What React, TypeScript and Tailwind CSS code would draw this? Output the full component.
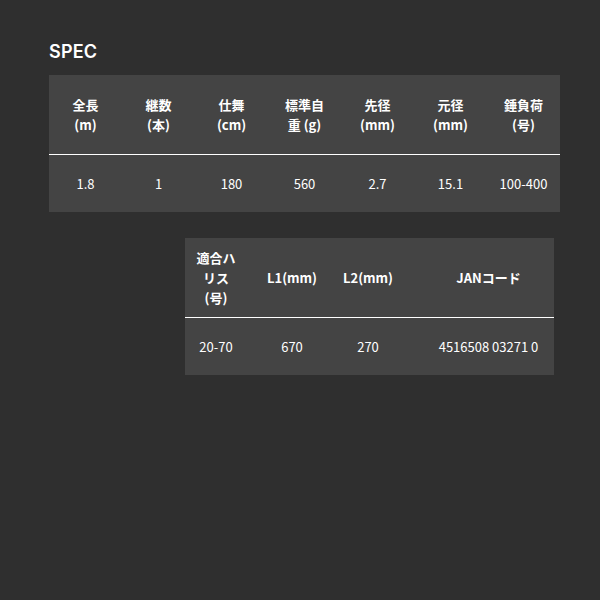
import React from "react";

const jp = { fontFamily: '"Noto Sans CJK JP", "Noto Sans", sans-serif' };

export default function App() {
  const head1: React.ReactNode[] = [
    <>全長<br />(m)</>,
    <>継数<br />(本)</>,
    <>仕舞<br />(cm)</>,
    <>標準自<br />重 (g)</>,
    <>先径<br />(mm)</>,
    <>元径<br />(mm)</>,
    <>錘負荷<br />(号)</>,
  ];
  const body1 = ["1.8", "1", "180", "560", "2.7", "15.1", "100-400"];
  return (
    <div className="w-[600px] h-[600px] bg-[#2f2f2f] text-white overflow-hidden" style={jp}>
      <div className="pt-[41px] pl-[49px]">
        <h2
          className="text-[18px] leading-[22px] font-semibold tracking-[0.2px]"
          style={{ fontFamily: 'Inter, "Noto Sans", sans-serif' }}
        >
          SPEC
        </h2>
      </div>
      <div className="ml-[49px] mt-[12px] w-[511px] bg-[#444444]">
        <div className="grid grid-cols-7 h-[79px] items-center">
          {head1.map((h, i) => (
            <div key={i} className="text-center text-[13px] leading-[20px] font-bold">
              {h}
            </div>
          ))}
        </div>
        <div className="h-[1px] bg-white" />
        <div className="grid grid-cols-7 h-[57px] items-center">
          {body1.map((b, i) => (
            <div key={i} className="text-center text-[13px] leading-[20px]">
              {b}
            </div>
          ))}
        </div>
      </div>
      <div className="ml-[185px] mt-[26px] w-[369px] bg-[#444444]">
        <div className="grid grid-cols-[62px_90px_62px_155px] h-[79px] items-center text-[13px] leading-[20px] font-bold">
          <div className="text-center">適合ハ<br />リス<br />(号)</div>
          <div className="text-center">L1(mm)</div>
          <div className="text-center">L2(mm)</div>
          <div className="text-center pl-[24px]">JANコード</div>
        </div>
        <div className="h-[1px] bg-white" />
        <div className="grid grid-cols-[62px_90px_62px_155px] h-[57px] items-center text-[13px] leading-[20px]">
          <div className="text-center">20-70</div>
          <div className="text-center">670</div>
          <div className="text-center">270</div>
          <div className="text-center pl-[24px]">4516508 03271 0</div>
        </div>
      </div>
    </div>
  );
}
